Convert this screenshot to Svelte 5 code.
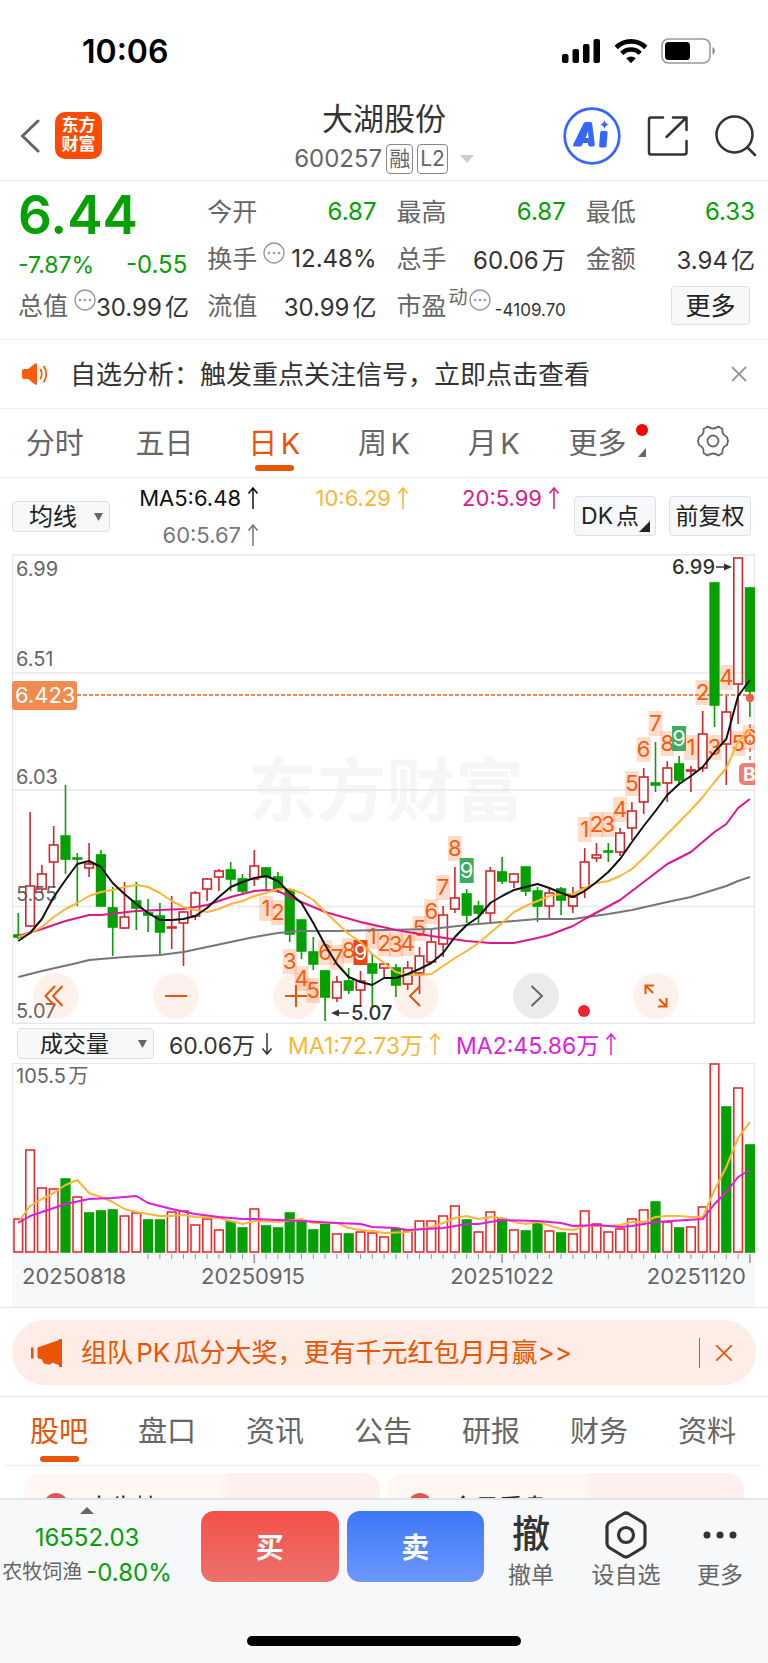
<script lang="ts">
  type Candle = [high: number, top: number, bottom: number, low: number, up: 0 | 1];
  type Point = [index: number, y: number];
  type Tag = [index: number, y: number, count: number, kind?: "sell" | "buy"];

  const STEP = 11.8;
  const BODY = 8.6;
  const cx = (i: number) => 6.3 + STEP * i;
  const line = (points: Point[]) => points.map(([i, y]) => `${cx(i).toFixed(1)},${y}`).join(" ");
  const dense = (ys: number[]): Point[] => ys.map((y, i) => [i, y]);

  // high, body top, body bottom, low, rising
  const candles: Candle[] = [
    [359,381,383,385,0], [258,332,372,373,1], [311,320,335,339,1], [272,291,308,334,1],
    [231,282,305,320,0], [299,304,305,352,0], [289,310,314,323,1], [296,301,352,352,0],
    [333,354,373,402,0], [328,363,374,375,1], [328,347,354,376,0], [345,359,361,378,0],
    [349,362,378,402,0], [342,373,374,395,1], [357,358,369,412,1], [337,339,362,366,1],
    [324,325,335,347,1], [315,317,323,337,1], [308,316,325,337,0], [320,325,337,339,0],
    [296,312,325,332,1], [313,314,323,335,0], [318,323,335,339,0], [335,336,380,388,0],
    [366,366,397,405,0], [383,398,410,416,0], [416,417,443,467,0], [422,428,444,448,1],
    [414,427,436,440,0], [417,427,436,452,1], [399,410,419,453,0], [409,410,414,423,1],
    [410,414,431,443,0], [407,414,430,436,1], [393,402,419,440,1], [376,388,408,409,1],
    [352,361,390,403,1], [313,344,355,359,1], [335,340,361,369,0], [347,352,359,369,0],
    [313,317,359,368,1], [303,318,327,330,0], [319,320,328,334,1], [313,313,337,342,0],
    [333,337,352,368,0], [333,339,352,364,1], [333,335,346,361,0], [333,343,352,359,1],
    [294,308,334,344,1], [289,301,304,308,1], [289,297,298,308,0], [274,279,298,302,1],
    [248,257,274,286,1], [214,223,248,260,1], [188,229,231,238,0], [207,214,229,248,1],
    [202,210,226,231,0], [212,216,217,238,1], [157,180,214,218,1], [28,29,151,173,0],
    [142,158,190,231,1], [4,4,130,170,1], [33,34,137,163,0],
  ];

  const ma5 = dense([
    387,379,365,343,326,310,307,313,329,340,350,359,366,366,365,362,354,343,333,328,324,
    322,327,339,349,369,391,410,423,428,431,424,424,420,415,409,399,383,371,363,349,342,
    336,333,330,334,339,343,337,328,318,305,288,272,257,241,230,222,213,198,185,142,126,
  ]);
  const ma10 = dense([
    383,379,373,363,355,349,342,338,336,333,331,333,339,347,353,356,358,355,350,347,342,
    339,335,335,339,346,358,369,380,388,400,409,418,421,421,420,412,404,397,389,379,369,
    358,352,347,342,340,340,334,329,327,322,315,304,292,280,268,256,243,228,214,188,175,
  ]);
  const ma20: Point[] = [
    [0,382],[2,375],[4,367],[6,361],[7,361],[10,357],[12,356],[14,355],[16,351],[18,343],
    [20,337],[21,336],[22,337],[24,348],[26,358],[29,368],[32,376],[35,382],[38,387],
    [40,389],[42,389],[44,384],[45,381],[47,372],[48,365],[51,346],[53,328],[55,310],
    [57,298],[58,288],[59,278],[60,270],[61,254],[62,245],
  ];
  const ma60: Point[] = [
    [0,423],[2,417],[5,409],[6,406],[9,403],[12,401],[14,398],[16,393],[18,388],[20,383],
    [22,379],[24,377],[27,377],[31,376],[35,375],[38,371],[40,369],[42,367],[44,365],
    [47,365],[50,360],[52,356],[55,348],[57,343],[60,332],[61,327],[62,323],
  ];

  const tags: Tag[] = [
    [21,354,1], [22,358,2], [23,407,3], [24,424,4], [25,436,5], [26,398,6], [27,403,7],
    [28,396,8], [29,398,9,"buy"], [30,382,1], [31,389,2], [32,390,3], [33,389,4],
    [34,374,5], [35,357,6], [36,333,7], [37,294,8], [38,316,9,"sell"],
    [48,275,1], [49,270,2], [50,270,3], [51,255,4], [52,229,5], [53,195,6], [54,169,7],
    [55,189,8], [56,184,9,"sell"], [57,193,1], [58,138,2], [59,193,3], [60,123,4],
    [61,189,5], [62,183,6],
  ];

  const volTop = [
    156,87,125,126,116,134,150,148,147,153,150,157,157,149,148,162,156,167,159,165,146,
    163,165,150,159,167,160,171,171,169,170,174,166,168,158,158,153,143,157,169,149,156,
    167,168,160,168,170,171,148,161,169,166,156,147,139,159,165,164,144,1,44,25,82,
  ];
  const volGreen = new Set([4,6,7,8,11,12,18,19,21,22,23,24,25,26,28,32,38,41,43,44,46,54,56,60,62]);
  const volMa1: Point[] = [
    [0,159],[1,143],[2,136],[3,130],[4,122],[5,117],[6,130],[7,134],[8,139],[9,146],
    [10,149],[12,153],[13,153],[14,152],[15,154],[17,155],[19,161],[20,158],[22,159],
    [24,156],[25,160],[27,160],[28,165],[29,167],[30,168],[31,170],[33,169],[34,166],
    [35,164],[36,160],[37,155],[38,153],[39,156],[40,154],[41,155],[42,159],[43,161],
    [44,159],[46,166],[47,167],[48,163],[50,163],[51,162],[52,159],[53,159],[54,154],
    [55,153],[56,153],[57,154],[58,154],[59,127],[60,104],[61,75],[62,59],
  ];
  const volMa2: Point[] = [
    [0,160],[1,153],[2,149],[4,141],[6,136],[8,135],[10,133],[11,140],[13,146],[15,151],
    [17,154],[19,156],[20,156],[24,158],[27,160],[29,161],[30,164],[32,165],[33,167],
    [36,165],[38,161],[39,161],[41,157],[44,158],[46,160],[47,163],[49,162],[51,164],
    [52,163],[54,159],[58,156],[59,141],[60,129],[61,114],[62,107],
  ];

  const ticks = Array.from({ length: 52 }, (_, k) => k + 11);
  const majorTicks = [20, 41, 62];

  const axis: [label: string, y: number][] = [
    ["6.99", 22], ["6.51", 112], ["6.03", 230], ["5.55", 347], ["5.07", 464],
  ];

  const periods = ["分时", "五日", "日K", "周K", "月K"];
  const sections = ["股吧", "盘口", "资讯", "公告", "研报", "财务", "资料"];
  let period = $state("日K");
  let section = $state("股吧");
  let noticeOpen = $state(true);
  let promoOpen = $state(true);
</script>

{#snippet info()}
  <svg class="info" viewBox="0 0 22 22" aria-hidden="true">
    <circle cx="11" cy="11" r="10" fill="none" stroke="#999" stroke-width="1.4"/>
    <g fill="#999"><circle cx="6" cy="11" r="1.3"/><circle cx="11" cy="11" r="1.3"/><circle cx="16" cy="11" r="1.3"/></g>
  </svg>
{/snippet}

{#snippet arrow(down = false)}
  <svg class="arrow" class:down viewBox="0 0 12 24" fill="none" stroke="currentColor" stroke-width="1.5" aria-hidden="true">
    <path d="M6 23V2M1.5 7.5 6 2l4.5 5.5"/>
  </svg>
{/snippet}

<div class="app">
  <div class="status">
    <span class="clock">10:06</span>
    <div class="status-icons">
      <svg width="40" height="26" viewBox="0 0 40 26">
        <rect x="1" y="16" width="6.5" height="9" rx="2"/>
        <rect x="11.5" y="11" width="6.5" height="14" rx="2"/>
        <rect x="22" y="6" width="6.5" height="19" rx="2"/>
        <rect x="32.5" y="1" width="6.5" height="24" rx="2"/>
      </svg>
      <svg width="34" height="26" viewBox="0 0 34 26">
        <g fill="none" stroke="#000" stroke-width="4.6">
          <path d="M2.2 9.5a21 21 0 0 1 29.6 0"/>
          <path d="M7.8 15.3a13 13 0 0 1 18.4 0"/>
        </g>
        <path d="M12.2 20.3a7 7 0 0 1 9.6 0L17 25.3z"/>
      </svg>
      <svg width="54" height="26" viewBox="0 0 54 26">
        <rect x="1" y="1" width="48" height="24" rx="6.5" fill="#fff" stroke="#999" stroke-width="1.6"/>
        <rect x="4" y="4" width="25" height="18" rx="3.5"/>
        <path d="M51.5 9a4.5 4.5 0 0 1 0 8z" fill="#8a8a8a"/>
      </svg>
    </div>
  </div>

  <header class="head">
    <div class="head-left">
      <button class="plain" aria-label="返回">
        <svg width="20" height="34" viewBox="0 0 20 34" fill="none" stroke="#666" stroke-width="3" stroke-linecap="round">
          <path d="M18 2 2.5 17 18 32"/>
        </svg>
      </button>
      <a class="logo" href="#home">东方<br>财富</a>
    </div>
    <div class="head-title">
      <h1>大湖股份</h1>
      <div class="code">
        <span>600257</span>
        <span class="chip">融</span>
        <span class="chip">L2</span>
        <span class="caret"></span>
      </div>
    </div>
    <div class="head-right">
      <button class="plain" aria-label="Ai">
        <svg width="58" height="58" viewBox="0 0 58 58">
          <circle cx="29" cy="29" r="27.3" fill="none" stroke="#3567fb" stroke-width="2.7"/>
          <path fill="#3567fb" fill-rule="evenodd" d="M20.5 16.500q.6-1.500 2.200-1.500h4.500q1.800 0 2 1.800l2.600 20.700q.2 2-1.700 2h-3q-1.700 0-1.900-1.800l-.3-1.700h-5l-.7 1.900q-.6 1.600-2.300 1.600h-5.400q-2 0-1.300-2zM25 24l-2.400 7h3z"/>
          <path fill="#3567fb" d="M37.2 25.500q.1-1.500 1.600-1.500h4.400q1.500 0 1.400 1.500L43.500 39q-.1 1.600-1.700 1.600h-4.200q-1.600 0-1.500-1.600zM41.500 13q.8 3.600 4.500 4.500-3.700.9-4.500 4.500-.8-3.600-4.500-4.500 3.700-.9 4.500-4.500z"/>
        </svg>
      </button>
      <button class="plain" aria-label="分享">
        <svg width="42" height="42" viewBox="0 0 42 42" fill="none" stroke="#333" stroke-width="2.5" stroke-linecap="round" stroke-linejoin="round">
          <path d="M16 2.5H4q-2 0-2 2v33q0 2 2 2h33q2.5 0 2.5-2V26M26 2.5h13.5V15M39 3 19.5 22"/>
        </svg>
      </button>
      <button class="plain" aria-label="搜索">
        <svg width="42" height="42" viewBox="0 0 42 42" fill="none" stroke="#333" stroke-width="2.5" stroke-linecap="round">
          <circle cx="19.5" cy="19.5" r="18"/><path d="m32.5 32.5 7.5 7.5"/>
        </svg>
      </button>
    </div>
  </header>

  <main>
    <section class="quote">
      <strong class="price">6.44</strong>
      <div class="cell"><span>今开</span><b class="g">6.87</b></div>
      <div class="cell"><span>最高</span><b class="g">6.87</b></div>
      <div class="cell"><span>最低</span><b class="g">6.33</b></div>

      <div class="cell change"><b class="g pct">-7.87%</b><b class="g">-0.55</b></div>
      <div class="cell"><span>换手{@render info()}</span><b>12.48%</b></div>
      <div class="cell"><span>总手</span><b>60.06万</b></div>
      <div class="cell"><span>金额</span><b>3.94亿</b></div>

      <div class="cell"><span>总值{@render info()}</span><b>30.99亿</b></div>
      <div class="cell"><span>流值</span><b>30.99亿</b></div>
      <div class="cell"><span>市盈<sup>动</sup>{@render info()}</span><b class="small">-4109.70</b></div>
      <div class="cell end"><button class="box more">更多</button></div>
    </section>

    {#if noticeOpen}
      <section class="notice">
        <svg width="26" height="22" viewBox="0 0 26 22" fill="#ff5c0a">
          <path d="M0 8q0-2 2-2h4l7-5.5q2-.8 2 1v19q0 1.800-2 1L6 16H2q-2 0-2-2z"/>
          <path d="M18.5 6.5q2.5 4.5 0 9M22 3.5q4.5 7.5 0 15" fill="none" stroke="#ff5c0a" stroke-width="1.8" stroke-linecap="round"/>
        </svg>
        <a href="#signal">自选分析：触发重点关注信号，立即点击查看</a>
        <button class="plain" aria-label="关闭提示" onclick={() => (noticeOpen = false)}>
          <svg width="16" height="16" viewBox="0 0 16 16" stroke="#999" stroke-width="1.8"><path d="m1 1 14 14M15 1 1 15"/></svg>
        </button>
      </section>
    {/if}

    <nav class="tabs periods">
      {#each periods as p}
        <button class:active={period === p} onclick={() => (period = p)}>{p}</button>
      {/each}
      <button class="has-more">更多<i class="dot"></i><i class="corner"></i></button>
      <button aria-label="设置">
        <svg width="32" height="32" viewBox="0 0 32 32" fill="none" stroke="#666" stroke-width="1.8" stroke-linejoin="round">
          <path d="M10.5 1.5Q16 5.5 21.5 1.5L25.5 4Q24.5 9.5 30 12L31 16L30 20Q24.5 22.5 25.5 28L21.5 30.5Q16 26.5 10.5 30.5L6.5 28Q7.5 22.5 2 20L1 16L2 12Q7.5 9.5 6.5 4Z"/>
          <circle cx="16" cy="16" r="5.5"/>
        </svg>
      </button>
    </nav>

    <section class="ma-row">
      <select class="box pick" aria-label="主图指标"><option>均线</option></select>
      <div class="ma-values">
        <span class="c5">MA5:6.48{@render arrow()}</span>
        <span class="c10">10:6.29{@render arrow()}</span>
        <span class="c20">20:5.99{@render arrow()}</span>
        <span class="c60">60:5.67{@render arrow()}</span>
      </div>
      <button class="box tool dk">DK点<i class="corner"></i></button>
      <button class="box tool">前复权</button>
    </section>

    <section class="kline">
      <svg class="plot" viewBox="0 0 743 470" role="img" aria-label="日K线">
        <text class="watermark" x="374" y="262" text-anchor="middle">东方财富</text>
        <g stroke="#e6e8ef" stroke-width="1.5" fill="none">
          <path d="M0 119H743M0 236H743M0 352.5H743"/>
          <rect x=".5" y=".8" width="742" height="468.5"/>
        </g>
        {#each axis as [label, y]}
          <text class="axis" x="4" {y}>{label}</text>
        {/each}

        <line x1="65" x2="743" y1="141" y2="141" stroke="#f08a50" stroke-width="1.8" stroke-dasharray="4 2"/>
        <rect y="127" width="65" height="29" rx="3" fill="#f28b4f"/>
        <text x="3" y="149" class="current">6.423</text>

        {#each candles as [high, top, bottom, low, up], i}
          <g stroke={up ? "#d2262c" : "#04a004"} stroke-width="1.6">
            {#if up}
              <path d="M{cx(i)} {high}V{top}M{cx(i)} {bottom}V{low}"/>
              <rect x={cx(i) - BODY / 2} y={top} width={BODY} height={Math.max(bottom - top, 1)} fill="none"/>
            {:else}
              <path d="M{cx(i)} {high}V{low}"/>
              <rect x={cx(i) - BODY / 2} y={top} width={BODY} height={Math.max(bottom - top, 1)} fill="#04a004"/>
            {/if}
          </g>
        {/each}

        {#each tags as [i, y, count, kind]}
          <rect x={cx(i) - 7} y={y - 12} width="14" height="25"
                fill={kind === "sell" ? "#3aad5f" : kind === "buy" ? "#e8451a" : "rgba(250,120,50,.25)"}/>
          <text class="tag" class:solid={kind} x={cx(i)} y={y + 8}>{count}</text>
        {/each}

        <g fill="none" stroke-width="2" stroke-linejoin="round">
          <polyline points={line(ma60)} stroke="#777"/>
          <polyline points={line(ma20)} stroke="#e0168c"/>
          <polyline points={line(ma10)} stroke="#fdb535"/>
          <polyline points={line(ma5)} stroke="#111"/>
        </g>

        <text class="mark" x="660" y="20">6.99</text>
        <path d="M704 13H714" stroke="#333" stroke-width="1.5"/><path d="M712 9.5 720 13 712 16.5z" fill="#333"/>
        <text class="mark" x="339" y="466">5.07</text>
        <path d="M325 459H337" stroke="#333" stroke-width="1.5"/><path d="M327 455.5 319 459 327 462.5z" fill="#333"/>

        <circle cx="738" cy="144" r="4.2" fill="#e8604a"/>
        <path d="M738 170V208" stroke="#f5706a" stroke-width="1.8" stroke-dasharray="4 4"/>
        <svg x="727" y="209" width="16" height="22" viewBox="0 0 16 22">
          <rect width="22" height="22" rx="5" fill="#fb7a6d"/>
          <text x="4" y="18" class="b-flag">B</text>
        </svg>
      </svg>

      <div class="controls">
        <button aria-label="最早">
          <svg viewBox="0 0 46 46"><path d="M22 13 12.5 23 22 33M29.5 13 20 23 29.5 33"/></svg>
        </button>
        <button aria-label="缩小"><svg viewBox="0 0 46 46"><path d="M12 23H34"/></svg></button>
        <button aria-label="放大"><svg viewBox="0 0 46 46"><path d="M12 23H34M23 12V34"/></svg></button>
        <button aria-label="左移"><svg viewBox="0 0 46 46"><path d="M27 13 17 23 27 33"/></svg></button>
        <button class="grey" aria-label="右移"><svg viewBox="0 0 46 46"><path d="M18.5 13 29 23 18.5 33"/></svg><i></i></button>
        <button aria-label="全屏">
          <svg viewBox="0 0 46 46"><path d="M12.5 21V12.5H21M12.5 12.5 20 20M33.5 25V33.5H25M33.5 33.5 26 26"/></svg>
        </button>
      </div>
    </section>

    <section class="vol-row">
      <select class="box pick wide" aria-label="副图指标"><option>成交量</option></select>
      <span>60.06万{@render arrow(true)}</span>
      <span class="c10">MA1:72.73万{@render arrow()}</span>
      <span class="cv2">MA2:45.86万{@render arrow()}</span>
    </section>

    <section class="volume">
      <svg class="plot" viewBox="0 0 743 244" role="img" aria-label="成交量">
        <rect y="190" width="743" height="54" fill="#f7f8fa"/>
        <path d="M.5 190V.5H742.5V190" fill="none" stroke="#e6e8ef" stroke-width="1.2"/>
        <text class="axis" x="4" y="20">105.5万</text>
        {#each volTop as top, i}
          <rect x={cx(i) - BODY / 2} y={top} width={BODY} height={189 - top}
                fill={volGreen.has(i) ? "#04a004" : "#fff"}
                stroke={volGreen.has(i) ? "#04a004" : "#f02a2a"} stroke-width="1.6"/>
        {/each}
        {#each ticks as i}
          <path d="M{cx(i)} 191V{majorTicks.includes(i) ? 200 : 196}" stroke="#999"
                stroke-width={majorTicks.includes(i) ? 1.6 : 1}/>
        {/each}
        <g fill="none" stroke-width="2" stroke-linejoin="round">
          <polyline points={line(volMa1)} stroke="#fdb535"/>
          <polyline points={line(volMa2)} stroke="#e01ae0"/>
        </g>
        <g class="dates">
          <text x="10" y="221">20250818</text>
          <text x="241" y="221" text-anchor="middle">20250915</text>
          <text x="490" y="221" text-anchor="middle">20251022</text>
          <text x="734" y="221" text-anchor="end">20251120</text>
        </g>
      </svg>
    </section>

    {#if promoOpen}
      <section class="promo-wrap">
        <div class="promo">
          <svg width="32" height="28" viewBox="0 0 32 28" fill="#eb5405">
            <path d="M0 8.5h2.6v11H0zM6.5 8.5 28 1V0h3v28h-3v-2l-7-2.5q-1 3-4.5 1.5Q12.500 26 11 20.500L6.500 19z"/>
          </svg>
          <a href="#promo">组队PK瓜分大奖，更有千元红包月月赢&gt;&gt;</a>
          <button class="plain" aria-label="关闭活动" onclick={() => (promoOpen = false)}>
            <svg width="16" height="16" viewBox="0 0 16 16" stroke="#eb5405" stroke-width="1.6"><path d="m0 0 16 16M16 0 0 16"/></svg>
          </button>
        </div>
      </section>
    {/if}

    <nav class="tabs sections">
      {#each sections as s}
        <button class:active={section === s} onclick={() => (section = s)}>{s}</button>
      {/each}
    </nav>

    <section class="cards">
      <a class="card" href="#rank"><i></i>大牛榜</a>
      <a class="card" href="#today"><i></i>今日看盘</a>
    </section>
  </main>

  <footer>
    <div class="trade">
      <div class="index">
        <i class="up"></i>
        <span class="g">16552.03</span>
        <span class="sector"><small>农牧饲渔</small> <span class="g">-0.80%</span></span>
      </div>
      <button class="buy">买</button>
      <button class="sell">卖</button>
      <button class="act"><span class="glyph">撤</span>撤单</button>
      <button class="act">
        <svg width="44" height="48" viewBox="0 0 44 48" fill="none" stroke="#333" stroke-width="3.2" stroke-linejoin="round">
          <path d="M19 3Q22 1 25 3L39 11.5Q41 13 41 15.5V32.5Q41 35 39 36.5L25 45Q22 47 19 45L5 36.5Q3 35 3 32.5V15.5Q3 13 5 11.5Z"/>
          <circle cx="22" cy="24" r="7.5"/>
        </svg>设自选
      </button>
      <button class="act">
        <svg width="36" height="48" viewBox="0 0 36 48" fill="#333"><circle cx="5" cy="24" r="3.5"/><circle cx="18" cy="24" r="3.5"/><circle cx="31" cy="24" r="3.5"/></svg>更多
      </button>
    </div>
    <div class="home-bar"></div>
  </footer>
</div>

<style>
  :global(body) { background: #fff; }

  .app {
    display: flex;
    flex-direction: column;
    height: 100vh;
    overflow: hidden;
    font-family: Inter, "Noto Sans CJK SC", sans-serif;
    font-size: 24px;
    color: #333;
    background: #fff;
    text-autospace: normal;
  }
  .app *, .app { box-sizing: border-box; }
  svg { display: block; flex-shrink: 0; }
  button { font: inherit; color: inherit; cursor: pointer; padding: 0; margin: 0; border: none; background: none; text-autospace: inherit; }
  select { font: inherit; color: inherit; appearance: none; }
  a { color: inherit; text-decoration: none; }
  i { display: block; }
  .g { color: #04a004; }

  .status {
    display: flex;
    justify-content: space-between;
    align-items: center;
    height: 94px;
    padding: 8px 53px 0 82px;
  }
  .clock { font-size: 32px; font-weight: 600; color: #000; }
  .status-icons { display: flex; gap: 13px; }

  .head {
    display: grid;
    grid-template-columns: 1fr auto 1fr;
    grid-template-rows: 100%;
    align-items: center;
    height: 87px;
    padding: 0 11px 3px;
    border-bottom: 1px solid #e6e6e6;
  }
  .head-left { display: flex; align-items: center; gap: 15px; padding-left: 9px; }
  .logo {
    width: 47px;
    height: 47px;
    padding-top: 4px;
    border-radius: 10px;
    background: #ff4a05;
    color: #fff;
    font-size: 17px;
    font-weight: 700;
    line-height: 19px;
    text-align: center;
  }
  .head-title { text-align: center; padding-top: 7px; }
  h1 { margin: 0; font-size: 31px; line-height: 40px; font-weight: 400; color: #333; }
  .code { display: flex; align-items: center; justify-content: center; gap: 4px; color: #666; line-height: 40px; }
  .chip {
    min-width: 27px;
    padding: 0 2px;
    border: 1px solid #888;
    border-radius: 4px;
    font-size: 21px;
    line-height: 28px;
  }
  .caret { margin-left: 8px; border: 7px solid transparent; border-top: 8px solid #ccc; border-bottom: 0; }
  .head-right { display: flex; align-items: center; justify-content: flex-end; gap: 26px; }

  .quote {
    display: grid;
    grid-template-columns: repeat(4, minmax(0, 1fr));
    grid-auto-rows: 47px;
    column-gap: 20px;
    padding: 7px 13px 10px 18px;
    border-bottom: 1px solid #efefef;
  }
  .cell { display: flex; align-items: center; justify-content: space-between; white-space: nowrap; color: #333; }
  .cell > span { display: flex; align-items: center; padding-bottom: 3px; font-size: 25px; color: #666; }
  .cell b { font-weight: 400; }
  .cell b.g { color: #04a004; }
  .cell .pct { font-size: 23px; }
  .cell .small { font-size: 17px; padding-top: 8px; }
  .cell.change { padding-top: 12px; }
  .cell.end { justify-content: flex-end; padding-right: 5px; }
  .cell sup { align-self: flex-start; font-size: 19px; line-height: 24px; margin-left: 2px; }
  .info { width: 22px; height: 22px; margin: 0 0 8px 6px; }
  sup + .info { margin-left: 1px; }
  .price { font-size: 53px; line-height: 54px; font-weight: 600; color: #04a004; }

  .box { border: 1px solid #dcdfe6; border-radius: 4px; background: #f7f8fa; color: #222; }
  .more { width: 79px; height: 39px; font-size: 25px; line-height: 34px; }

  .notice {
    display: flex;
    align-items: center;
    height: 69px;
    padding: 0 21px 0 22px;
    border-bottom: 1px solid #efefef;
    font-size: 26px;
    color: #333;
  }
  .notice a { flex: 1; margin-left: 22px; padding-bottom: 4px; }

  .tabs { display: grid; grid-template-columns: repeat(7, 1fr); height: 69px; font-size: 29px; color: #666; }
  .tabs button { position: relative; display: flex; align-items: center; justify-content: center; padding-bottom: 4px; white-space: nowrap; }
  .tabs .active { color: #eb5405; }
  .tabs .active::after {
    content: "";
    position: absolute;
    bottom: 6px;
    width: 39px;
    height: 6px;
    border-radius: 3px;
    background: #eb5405;
  }
  .periods { border-bottom: 1px solid #efefef; }
  .corner { position: absolute; border-left: 8px solid transparent; border-bottom: 9px solid #666; }
  .tabs .has-more { padding-right: 12px; }
  .has-more .corner { right: 12px; bottom: 20px; }
  .has-more .dot { position: absolute; right: 10px; top: 15px; width: 12px; height: 12px; border-radius: 50%; background: #f00; }

  .ma-row { display: flex; align-items: flex-start; height: 76px; padding: 0 17px 0 12px; }
  .pick {
    width: 98px;
    height: 31px;
    padding: 0 0 0 16px;
    line-height: 26px;
    background: #f7f8fa url("data:image/svg+xml,%3Csvg xmlns='http://www.w3.org/2000/svg' viewBox='0 0 9 8'%3E%3Cpath d='M0 0h9L4.5 8z' fill='%23666'/%3E%3C/svg%3E") no-repeat right 6px center / 9px 8px;
  }
  .ma-row .pick { margin-top: 23px; }
  .ma-values {
    flex: 1;
    display: grid;
    grid-template-columns: 149px 150px 151px;
    grid-auto-rows: 37px;
    padding-top: 1px;
    font-size: 22px;
  }
  .ma-values span, .vol-row span { display: flex; align-items: center; justify-content: flex-end; gap: 6px; white-space: nowrap; }
  .arrow { width: 12px; height: 24px; }
  .arrow.down { transform: rotate(180deg); }
  .c5 { color: #111; }
  .c10 { color: #fdb535; }
  .c20 { color: #e0168c; }
  .c60 { color: #777; }
  .cv2 { color: #e01ae0; }
  .tool { position: relative; width: 82px; height: 40px; margin: 18px 0 0 13px; line-height: 36px; font-size: 23px; white-space: nowrap; }
  .dk { padding-right: 10px; }
  .dk .corner { right: 5px; bottom: 3px; border-left-width: 11px; border-bottom: 11px solid #222; }

  .kline, .volume { position: relative; padding: 0 13px 0 12px; }
  .volume { border-bottom: 1px solid #e3e4e8; }
  .plot { width: 100%; height: auto; }
  .axis { font-size: 20px; fill: #666; }
  .watermark { font-size: 69px; font-weight: 700; fill: #f6f6f6; }
  .current { font-size: 22px; fill: #fff; }
  .tag { font-size: 22px; fill: #fa5a0a; text-anchor: middle; }
  .tag.solid { fill: #fff; }
  .mark { font-size: 20px; font-weight: 500; fill: #333; }
  .b-flag { font-size: 19px; font-weight: 700; fill: #fff; }
  .dates { font-size: 22px; fill: #666; }

  .controls {
    position: absolute;
    left: 0;
    right: 0;
    bottom: 5px;
    display: flex;
    justify-content: space-between;
    padding: 0 89px 0 33px;
  }
  .controls button { position: relative; width: 46px; height: 46px; border-radius: 50%; background: rgba(242, 110, 50, .1); }
  .controls svg { fill: none; stroke: #eb5405; stroke-width: 2; }
  .controls .grey { background: rgba(0, 0, 0, .08); }
  .controls .grey svg { stroke: #666; }
  .controls i { position: absolute; right: -31px; bottom: 2px; width: 12px; height: 12px; border-radius: 50%; background: #f5222d; }

  .vol-row {
    display: flex;
    align-items: center;
    height: 39px;
    padding-left: 17px;
    gap: 15px;
    font-size: 23px;
    text-autospace: no-autospace;
  }
  .wide { width: 137px; padding-left: 22px; }

  .promo-wrap { padding: 12px 12px 11px; border-bottom: 1px solid #e3e4e8; }
  .promo {
    display: flex;
    align-items: center;
    height: 65px;
    padding: 0 24px 0 19px;
    border-radius: 33px;
    background: #fdede6;
    color: #eb5405;
    font-size: 26px;
  }
  .promo a { flex: 1; margin-left: 18px; padding-bottom: 4px; }
  .promo button { height: 30px; padding-left: 16px; border-left: 1px solid #eb5405; }

  .sections { margin: 0 7px 0 5px; border-bottom: 1px solid #e9e9e9; }
  .sections .active::after { bottom: 3px; }

  main { flex: 1; min-height: 0; overflow: hidden; }
  .cards { display: grid; grid-template-columns: 1fr 1fr; gap: 8px; padding: 7px 24px 0; }
  .card {
    display: flex;
    gap: 19px;
    height: 90px;
    padding: 20px 20px 0;
    border-radius: 16px;
    background: linear-gradient(90deg, #fef7f3 55%, #fef0ee 58%);
    color: #222;
    line-height: 30px;
  }
  .card i { width: 24px; height: 24px; border-radius: 50%; background: #e0574f; }

  footer { height: 165px; border-top: 2px solid #e3e4e6; background: #f7f8fa; }
  .trade { display: grid; grid-template-columns: 193px 1fr 1fr 78px 96px 76px; gap: 8px; height: 84px; padding: 11px 10px 0 0; }
  .index { display: flex; flex-direction: column; align-items: center; width: 174px; margin-top: -4px; font-size: 24px; line-height: 35px; white-space: nowrap; }
  .up { margin-bottom: 6px; border: 7px solid transparent; border-top: 0; border-bottom: 7px solid #666; }
  .sector { display: flex; align-items: center; gap: 4px; }
  .sector small { font-size: 20px; color: #666; }
  .buy, .sell { height: 71px; padding-bottom: 2px; border-radius: 13px; color: #fff; font-size: 28px; font-weight: 700; }
  .buy { background: linear-gradient(#f4504a, #ec716c); }
  .sell { background: linear-gradient(#3c78f8, #6c98fe); }
  .act { display: flex; flex-direction: column; align-items: center; height: 84px; font-size: 23px; line-height: 32px; color: #666; white-space: nowrap; }
  .glyph { height: 48px; font-size: 38px; line-height: 44px; font-weight: 500; color: #333; }
  .home-bar { width: 274px; height: 10px; margin: 52px auto 0; border-radius: 5px; background: #000; }
</style>
